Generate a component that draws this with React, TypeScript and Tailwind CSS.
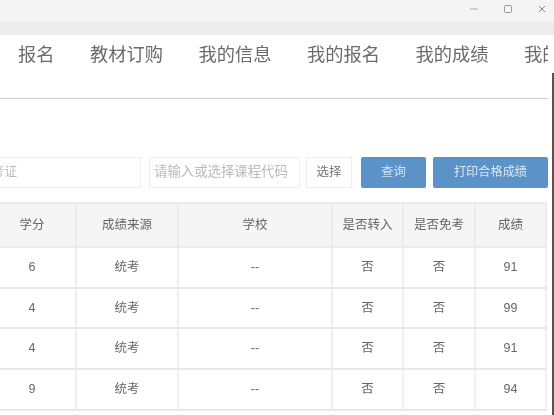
import React from "react";

const font = { fontFamily: '"Liberation Sans","Noto Sans CJK SC",sans-serif' };
const nav = ["报名", "教材订购", "我的信息", "我的报名", "我的成绩", "我的考试"];
const heads = ["学分", "成绩来源", "学校", "是否转入", "是否免考", "成绩"];
const rows = [
  { h: "h-[41px]", v: ["6", "统考", "--", "否", "否", "91"] },
  { h: "h-[40px]", v: ["4", "统考", "--", "否", "否", "99"] },
  { h: "h-[41px]", v: ["4", "统考", "--", "否", "否", "91"] },
  { h: "h-[41px]", v: ["9", "统考", "--", "否", "否", "94"] },
];

export default function App() {
  return (
    <div style={font} className="relative w-[554px] h-[415px] overflow-hidden bg-white text-[#666] blur-[0.4px]">
      <div className="h-[22px] bg-[#f4f4f4] flex items-start justify-end pt-[4px] pr-[7px] gap-[24px]">
        <svg width="10" height="10" viewBox="0 0 10 10"><path d="M1 5h8" stroke="#aaa" strokeWidth="1" /></svg>
        <svg width="10" height="10" viewBox="0 0 10 10"><rect x="1.5" y="1.5" width="7" height="7" rx="1" fill="none" stroke="#999" /></svg>
        <svg width="10" height="10" viewBox="0 0 10 10"><path d="M2 2l6 6M8 2l-6 6" stroke="#888" strokeWidth="1" fill="none" /></svg>
      </div>
      <div className="h-[13px] bg-[#ececec]" />
      <nav className="h-[64px] border-b border-[#cfcfcf] flex items-start pt-[7px] pl-[18px] gap-[35.5px] mr-[6px] whitespace-nowrap overflow-hidden">
        {nav.map((n) => (
          <span key={n} className="text-[18.25px] leading-[26px] text-[#6b6b6b] shrink-0">{n}</span>
        ))}
      </nav>
      <div className="flex items-stretch h-[31px] mt-[58px] text-[12.5px]">
        <div className="w-[141px] border border-l-0 border-[#eeeeee] flex items-center justify-end pr-[123px] text-[#bbb] whitespace-nowrap overflow-hidden">准考证</div>
        <div className="w-[151px] ml-[8px] border border-[#eeeeee] flex items-center pl-[4px] text-[13.4px] text-[#bbb] whitespace-nowrap">请输入或选择课程代码</div>
        <div className="w-[46px] ml-[6px] border border-[#eeeeee] flex items-center justify-center text-[#777]">选择</div>
        <div className="w-[65px] ml-[9px] bg-[#5b92c8] rounded-[2px] flex items-center justify-center text-[#cfe0f0]">查询</div>
        <div className="w-[115px] ml-[7px] bg-[#5b92c8] rounded-[2px] flex items-center justify-center text-[12.2px] text-[#dbe7f3]">打印合格成绩</div>
      </div>
      <table className="table-fixed border-collapse mt-[14px] ml-[-13px] w-[558px] text-[12.5px] text-center">
        <colgroup>
          <col className="w-[88px]" />
          <col className="w-[102px]" />
          <col className="w-[154px]" />
          <col className="w-[71px]" />
          <col className="w-[72px]" />
          <col className="w-[71px]" />
        </colgroup>
        <thead>
          <tr className="h-[44px] bg-[#f5f5f5]">
            {heads.map((h) => (
              <th key={h} className="font-normal border-[2px] border-[#ebebeb] p-0">{h}</th>
            ))}
          </tr>
        </thead>
        <tbody>
          {rows.map((r, i) => (
            <tr key={i} className={r.h}>
              {r.v.map((c, j) => (
                <td key={j} className="border-x-[2px] border-[#f0f0f0] border-b-[2px] border-b-[#e8e8e8] p-0">{c}</td>
              ))}
            </tr>
          ))}
        </tbody>
      </table>
      <div className="absolute right-0 top-[73px] bottom-0 w-[2px] bg-[#555]" />
    </div>
  );
}
